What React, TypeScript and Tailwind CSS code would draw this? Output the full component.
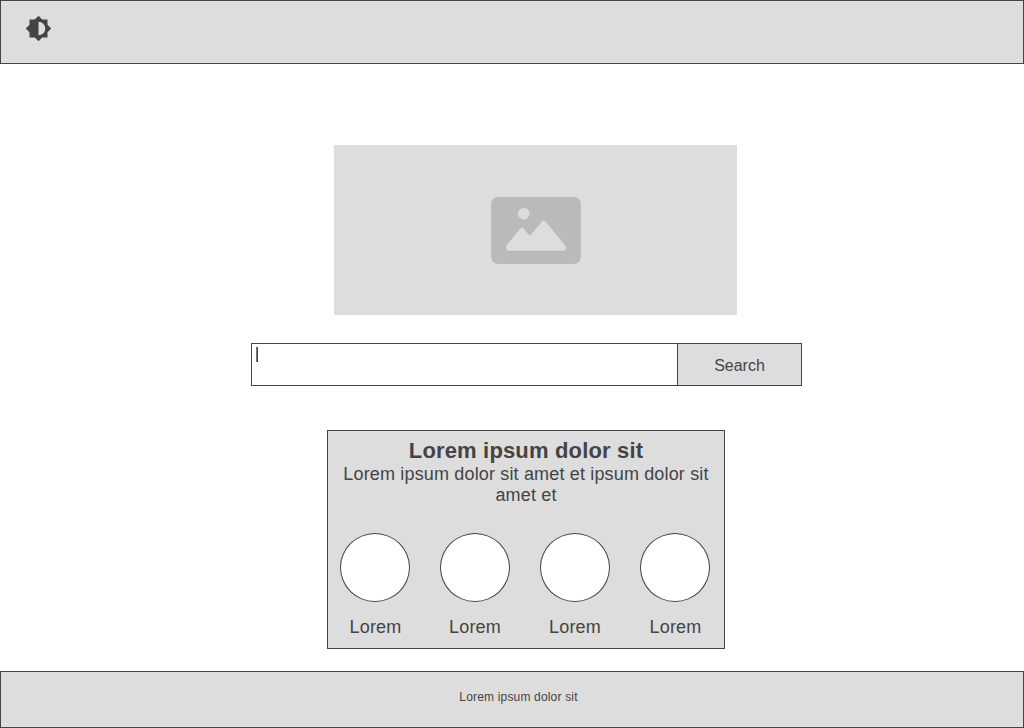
const items = [
  { label: "Lorem", nudge: "pl-px" },
  { label: "Lorem", nudge: "" },
  { label: "Lorem", nudge: "" },
  { label: "Lorem", nudge: "pl-px" },
];

function BrightnessIcon() {
  return (
    <svg viewBox="0 0 24 24" className="size-[27px]" fill="#444444" aria-hidden="true">
      <path d="M20 15.31L23.31 12 20 8.69V4h-4.69L12 .69 8.69 4H4v4.69L.69 12 4 15.31V20h4.69L12 23.31 15.31 20H20v-4.69zM12 18V6c3.31 0 6 2.69 6 6s-2.69 6-6 6z" />
    </svg>
  );
}

function PictureIcon() {
  return (
    <svg viewBox="0 0 90 67" className="h-[67px] w-[90px]" aria-hidden="true">
      <rect x="0.2" width="89.6" height="67" rx="6.5" fill="#bababa" />
      <circle cx="32.7" cy="16.7" r="5.8" fill="#dddddd" />
      <path
        d="M17.8 53.7H72.2Q74.8 53.5 74.9 51Q75 49.5 73.8 48L54.5 24.6Q52.8 22.6 51 24.6L40.9 36.8Q38.9 39.2 36.8 36.8L32.9 31.8Q31.1 29.8 29.3 31.8L16.2 47.2Q15 48.8 15 50.5Q15.2 53.3 17.8 53.7Z"
        fill="#dddddd"
      />
    </svg>
  );
}

export default function App() {
  return (
    <div className="flex h-[728px] w-[1024px] flex-col bg-white font-['Liberation_Sans',Arial,sans-serif] text-[#444444]">
      <header className="h-16 shrink-0 border border-[#444444] bg-[#dddddd] pt-[14px] pl-[24px]">
        <BrightnessIcon />
      </header>

      <main className="flex h-[607px] shrink-0 flex-col items-start">
        <div className="mt-[81px] ml-[334px] flex h-[170px] w-[403px] justify-center bg-[#dddddd] pt-[52px] pl-px">
          <PictureIcon />
        </div>

        <form className="mt-7 ml-[251px] flex h-[43px] w-[551px] border border-[#444444]">
          <div className="flex-1 pt-[3px] pl-1">
            <div className="h-[15px] w-[2px] border-r border-[#444444] bg-[#777777]" />
          </div>
          <button
            type="button"
            className="w-[124px] border-l border-[#444444] bg-[#dddddd] pt-[3px] text-base"
          >
            Search
          </button>
        </form>

        <section className="mt-11 ml-[327px] h-[219px] w-[398px] border border-[#444444] bg-[#dddddd] text-center tracking-[0.16px]">
          <h1 className="pt-[7px] text-[22px] leading-[26px] font-bold">Lorem ipsum dolor sit</h1>
          <p className="px-2 text-lg leading-[21px]">
            Lorem ipsum dolor sit amet et ipsum dolor sit amet et
          </p>
          <ul className="mt-[27px] ml-3 flex gap-[30px]">
            {items.map(({ label, nudge }, i) => (
              <li key={i} className="w-[70px]">
                <div className="h-[69px] rounded-[50%] border border-[#444444] bg-white" />
                <div className={`mt-[15px] text-lg leading-[21px] ${nudge}`}>{label}</div>
              </li>
            ))}
          </ul>
        </section>
      </main>

      <footer className="h-[57px] shrink-0 border border-[#444444] bg-[#dddddd] pt-[18px] pl-[13px] text-center text-xs leading-[14px] tracking-[0.17px]">
        Lorem ipsum dolor sit
      </footer>
    </div>
  );
}
